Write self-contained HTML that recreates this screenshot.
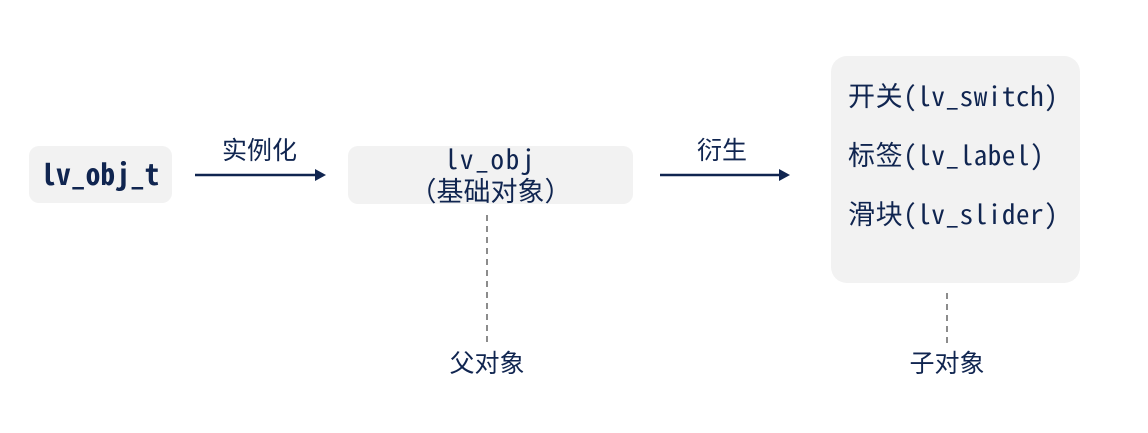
<!DOCTYPE html>
<html><head><meta charset="utf-8"><style>
body{margin:0;width:1148px;height:433px;background:#fff;position:relative;overflow:hidden;font-family:"WenQuanYi Zen Hei Mono","Noto Sans Mono CJK SC","Noto Sans CJK SC",monospace;color:#102550}
.b{position:absolute;background:#f2f2f2;border-radius:10px}
.t{position:absolute;white-space:nowrap;line-height:1}
</style></head><body>
<div class="b" style="left:29px;top:146px;width:143px;height:57px"></div>
<div class="t" style="left:29px;width:143px;top:159px;text-align:center;font-size:29px;font-weight:bold;letter-spacing:0.3px">lv_obj_t</div>
<div class="t" style="left:222px;top:137px;font-size:25px">实例化</div>
<svg style="position:absolute;left:0;top:0" width="1148" height="433">
<line x1="195" y1="175" x2="318" y2="175" stroke="#102550" stroke-width="2.5"/>
<polygon points="315,169 326,175 315,181" fill="#102550"/>
<line x1="660" y1="175" x2="782" y2="175" stroke="#102550" stroke-width="2.5"/>
<polygon points="779,169 790,175 779,181" fill="#102550"/>
<line x1="487" y1="215" x2="487" y2="342" stroke="#666" stroke-width="1.5" stroke-dasharray="6,5"/>
<line x1="947" y1="293" x2="947" y2="346" stroke="#666" stroke-width="1.5" stroke-dasharray="6,5"/>
</svg>
<div class="b" style="left:348px;top:146px;width:285px;height:58px"></div>
<div class="t" style="left:348px;width:285px;top:144px;text-align:center;font-size:27px;letter-spacing:1.8px">lv_obj</div>
<div class="t" style="left:348px;width:285px;top:176px;text-align:center;font-size:27px">（基础对象）</div>
<div class="t" style="left:697px;top:137px;font-size:25px">衍生</div>
<div class="b" style="left:831px;top:56px;width:249px;height:227px;border-radius:16px"></div>
<div class="t" style="left:848px;top:81px;font-size:27px;letter-spacing:0.6px">开关(lv_switch)</div>
<div class="t" style="left:848px;top:140px;font-size:27px;letter-spacing:0.6px">标签(lv_label)</div>
<div class="t" style="left:848px;top:199px;font-size:27px;letter-spacing:0.6px">滑块(lv_slider)</div>
<div class="t" style="left:437px;width:100px;top:350px;text-align:center;font-size:25px">父对象</div>
<div class="t" style="left:897px;width:100px;top:350px;text-align:center;font-size:25px">子对象</div>
</body></html>
